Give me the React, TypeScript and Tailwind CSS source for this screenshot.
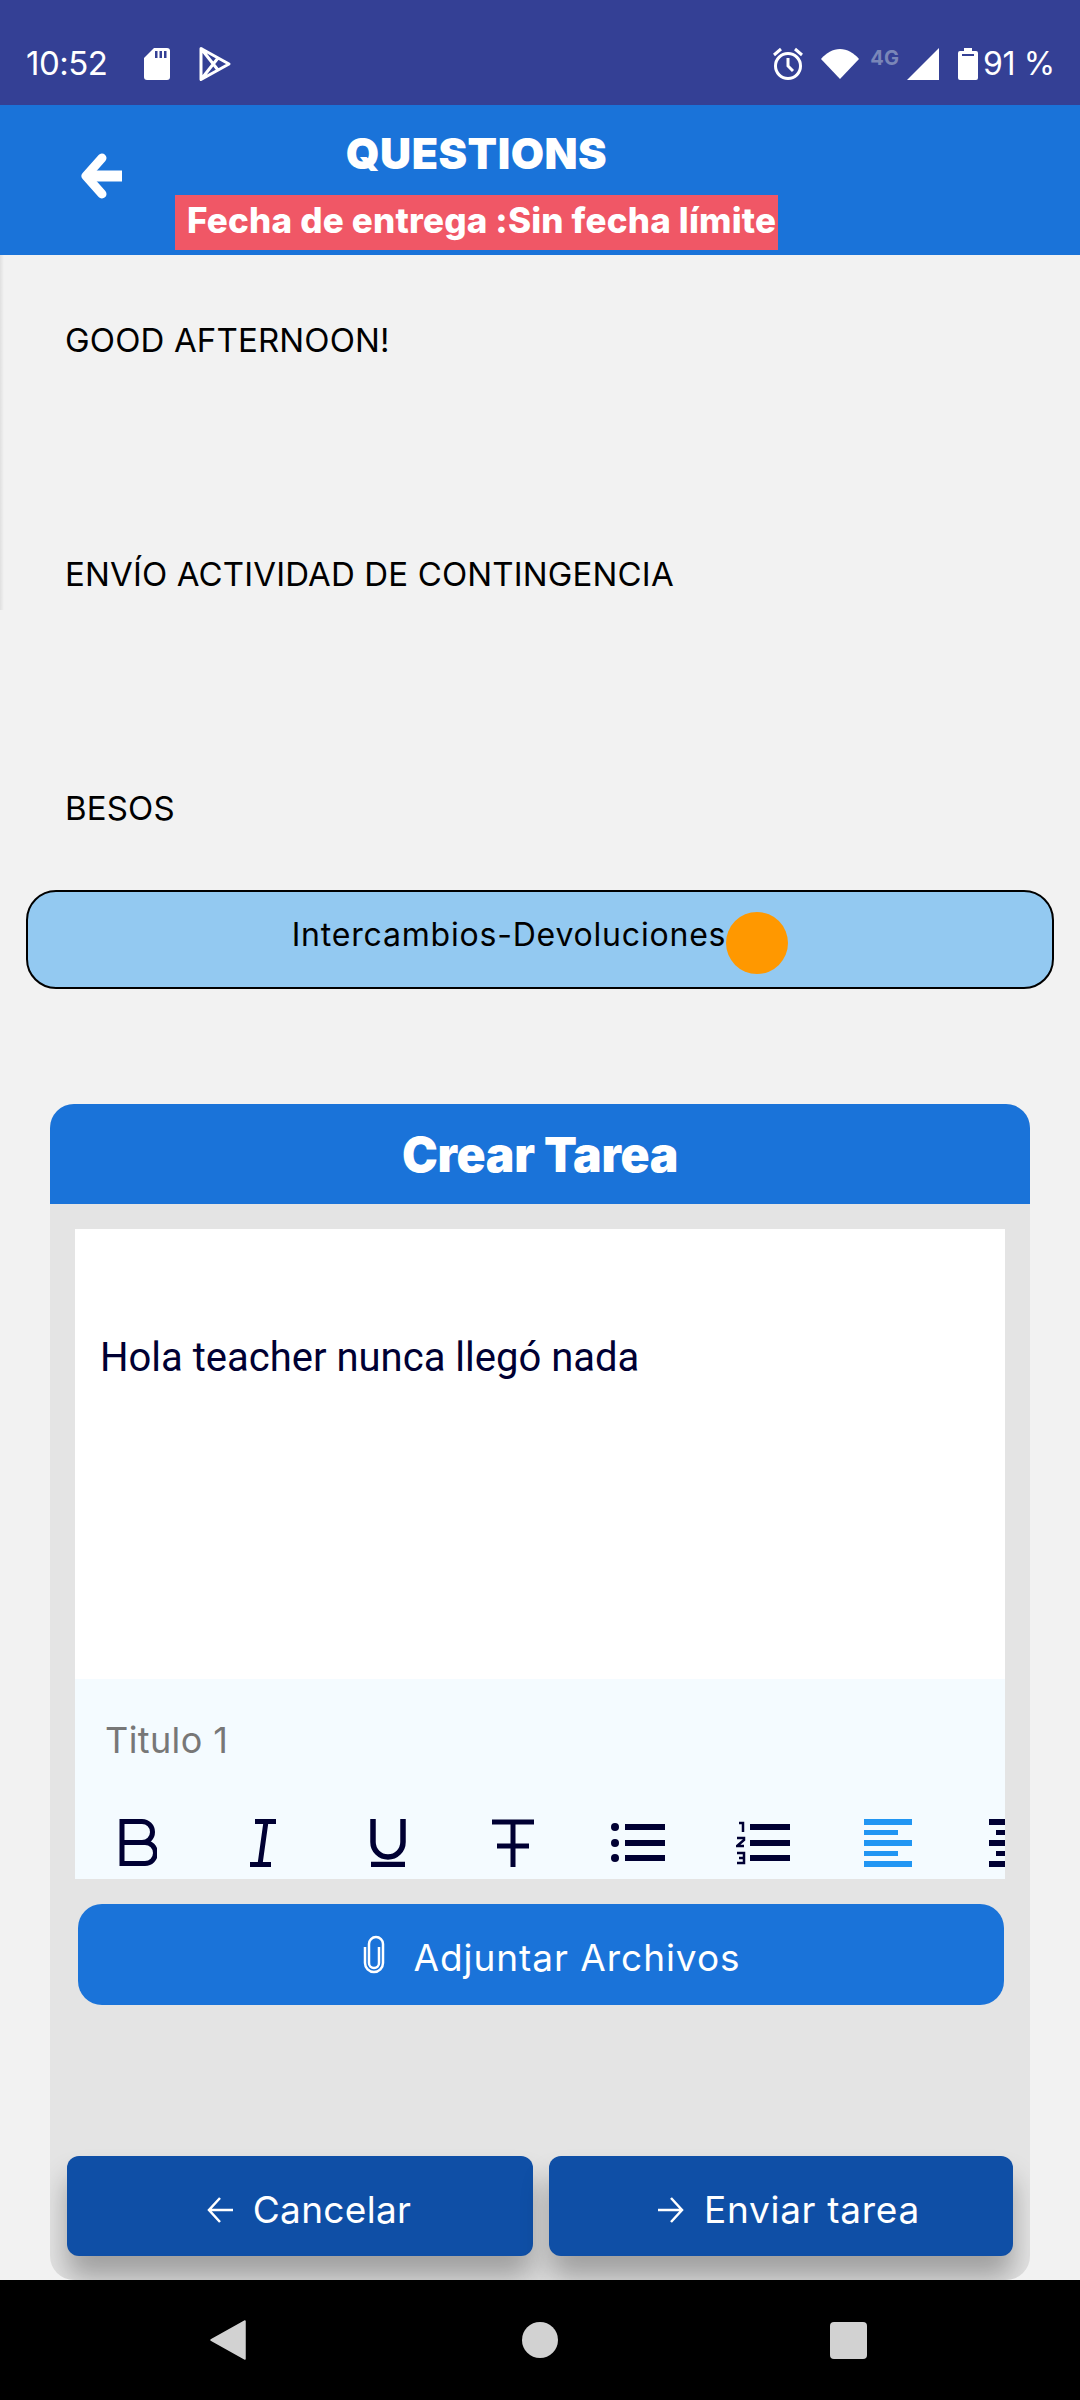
import type { ReactNode } from 'react';

const sans = 'font-["Inter","Liberation_Sans",sans-serif]';
const ink = '#000033';

function Tool({ children }: { children: ReactNode }) {
  return <div className="w-[125px] shrink-0 flex items-center justify-center">{children}</div>;
}

function Toolbar() {
  return (
    <div className="flex h-[48px] overflow-hidden">
      <Tool>
        <svg width="38" height="48" viewBox="0 0 38 48" fill="none" stroke={ink} strokeWidth="5">
          <path d="M3 2.5h20a10.5 10.5 0 0 1 0 21H3zM3 23.5h23a10.5 10.5 0 0 1 0 21H3z" />
        </svg>
      </Tool>
      <Tool>
        <svg width="28" height="48" viewBox="0 0 28 48" fill="none" stroke={ink} strokeWidth="5">
          <path d="M6 2.5h21M1 45.5h21M17 2.5l-6 43" />
        </svg>
      </Tool>
      <Tool>
        <svg width="36" height="48" viewBox="0 0 36 48" fill="none" stroke={ink} strokeWidth="5.5">
          <path d="M3 0v23a15 15 0 0 0 30 0V0M1 45.5h34" />
        </svg>
      </Tool>
      <Tool>
        <svg width="42" height="48" viewBox="0 0 42 48" fill="none" stroke={ink} strokeWidth="5">
          <path d="M0 3h42M21 3v45M5 27h32" />
        </svg>
      </Tool>
      <Tool>
        <svg width="54" height="48" viewBox="0 0 54 48" fill={ink}>
          <circle cx="4" cy="8" r="4" />
          <circle cx="4" cy="24" r="4" />
          <circle cx="4" cy="39" r="4" />
          <rect x="14" y="5" width="40" height="6" />
          <rect x="14" y="21" width="40" height="6" />
          <rect x="14" y="36" width="40" height="6" />
        </svg>
      </Tool>
      <Tool>
        <svg width="54" height="48" viewBox="0 0 54 48" fill="none" stroke={ink}>
          <path d="M14 8h40M14 24h40M14 39h40" strokeWidth="6" />
          <path d="M3 4h4v9M1 19h7v2l-7 6h7M1 34h7v10H1M3 39h5" strokeWidth="2.5" />
        </svg>
      </Tool>
      <Tool>
        <svg width="48" height="48" viewBox="0 0 48 48" fill="#2196f3">
          <rect x="0" y="0" width="48" height="6" />
          <rect x="0" y="11" width="34" height="5" />
          <rect x="0" y="21" width="48" height="6" />
          <rect x="0" y="32" width="34" height="5" />
          <rect x="0" y="42" width="48" height="6" />
        </svg>
      </Tool>
      <Tool>
        <svg width="48" height="48" viewBox="0 0 48 48" fill={ink}>
          <rect x="0" y="0" width="48" height="6" />
          <rect x="7" y="11" width="34" height="5" />
          <rect x="0" y="21" width="48" height="6" />
          <rect x="7" y="32" width="34" height="5" />
          <rect x="0" y="42" width="48" height="6" />
        </svg>
      </Tool>
    </div>
  );
}

export default function App() {
  return (
    <div className={`w-[1080px] h-[2400px] flex flex-col overflow-hidden bg-[#f2f2f2] ${sans}`}>
      {/* Status bar */}
      <div className="h-[105px] shrink-0 bg-[#344095] text-white flex items-center pt-[22px] pl-[26px] pr-[25px]">
        <span className="text-[33px] tracking-[-0.5px] w-[118px]">10:52</span>
        <svg width="26" height="32" viewBox="0 0 26 32" fill="white">
          <path d="M10 0h13a3 3 0 0 1 3 3v26a3 3 0 0 1-3 3H3a3 3 0 0 1-3-3V10z" />
          <path d="M11 3h2.5v7H11zM15.5 3H18v7h-2.5zM20 3h2.5v7H20z" fill="#344095" />
        </svg>
        <svg className="ml-[28px]" width="34" height="36" viewBox="0 0 34 36" fill="none" stroke="white" strokeWidth="3" strokeLinejoin="round">
          <path d="M3 2.5 31 18 3 33.5zM3 2.5 20 24M3 33.5 20 12" />
        </svg>
        <div className="flex-1" />
        <svg width="32" height="34" viewBox="0 0 32 34" fill="none" stroke="white" strokeWidth="3">
          <circle cx="16" cy="19" r="12.5" />
          <path d="M16 11v8l5 5M2 8l7-6M30 8l-7-6" />
        </svg>
        <svg className="ml-[17px]" width="38" height="30" viewBox="0 0 38 30" fill="white">
          <path d="M0 10C5 4 12 0 19 0s14 4 19 10L19 30z" />
        </svg>
        <span className="ml-[11px] mb-[12px] text-[20px] font-bold leading-none text-[#7a86b8]">4G</span>
        <svg className="ml-[8px]" width="32" height="32" viewBox="0 0 32 32" fill="white">
          <path d="M32 0v32H0z" />
        </svg>
        <svg className="ml-[19px]" width="20" height="32" viewBox="0 0 20 32" fill="white">
          <path d="M6 0h8v3h4a2 2 0 0 1 2 2v25a2 2 0 0 1-2 2H2a2 2 0 0 1-2-2V5a2 2 0 0 1 2-2h4z" />
          <rect x="4" y="6" width="12" height="2" fill="#344095" />
        </svg>
        <span className="ml-[5px] text-[32px] tracking-[-0.3px]">91 %</span>
      </div>

      {/* Header */}
      <div className="h-[150px] shrink-0 bg-[#1a73d9] flex relative">
        <svg className="absolute left-[80px] top-[48px]" width="42" height="46" viewBox="0 0 42 46" fill="none" stroke="white" strokeLinecap="round" strokeLinejoin="round">
          <path d="M22 5 6 23l16 18" strokeWidth="9" />
          <path d="M8 23h34" strokeWidth="11" strokeLinecap="butt" />
        </svg>
        <div className="ml-[175px] flex flex-col items-center w-[603px]">
          <span className="mt-[26px] h-[44px] leading-[44px] text-[43px] font-black text-white tracking-[0.5px]">QUESTIONS</span>
          <span className="mt-[20px] h-[55px] w-[603px] bg-[#f05766] pl-[12px] leading-[50px] text-[35px] font-extrabold text-white tracking-[0.2px] whitespace-nowrap overflow-hidden">Fecha de entrega :Sin fecha límite</span>
        </div>
      </div>

      {/* Content */}
      <div className="flex-1 min-h-0 relative">
        <div className="absolute left-0 top-0 h-[355px] w-[4px] bg-gradient-to-r from-[#e0e0e0] to-transparent" />
        <div className="pt-[65px] pl-[65px] flex flex-col gap-[194px] text-[33px] leading-[40px] text-black tracking-[0.15px]">
          <p>GOOD AFTERNOON!</p>
          <p>ENVÍO ACTIVIDAD DE CONTINGENCIA</p>
          <p>BESOS</p>
        </div>

        <div className="mt-[62px] mx-[26px] h-[99px] rounded-[30px] border-2 border-black bg-[#93c9f1] flex items-center justify-center">
          <span className="text-[32px] tracking-[0.8px] text-black leading-none mb-[10px]">Intercambios-Devoluciones</span>
          <span className="w-[62px] h-[62px] rounded-full bg-[#ff9800] mt-[6px]" />
        </div>

        <div className="mt-[115px] mx-[50px] h-[1176px] rounded-[24px] overflow-hidden bg-[#e4e4e4] flex flex-col">
          <div className="h-[100px] shrink-0 bg-[#1a73d9] flex items-center justify-center pt-[2px] text-[48px] font-black text-white tracking-[-0.3px]">Crear Tarea</div>
          <div className="mt-[25px] mx-[25px]">
            <div className="h-[450px] bg-white pt-[105px] pl-[25px] font-['Roboto',sans-serif] text-[40px] leading-[48px] text-[#000033]">Hola teacher nunca llegó nada</div>
            <div className="h-[200px] bg-[#f4fbff]">
              <div className="pt-[39px] pl-[30px] h-[140px] text-[36px] leading-[44px] text-[#777777] tracking-[0.4px]">Titulo 1</div>
              <Toolbar />
            </div>
          </div>
          <div className="mt-[25px] ml-[28px] mr-[26px] h-[101px] rounded-[24px] bg-[#1a73d9] flex items-center justify-center gap-[26px] pl-[20px] text-[37px] text-white tracking-[0.95px]">
            <svg width="26" height="40" viewBox="0 0 26 40" fill="none" stroke="white" strokeWidth="2.5">
              <path d="M4 12v16a9 9 0 0 0 18 0V9a7 7 0 0 0-14 0v19a5 5 0 0 0 10 0V12" />
            </svg>
            <span className="pt-[6px]">Adjuntar Archivos</span>
          </div>
          <div className="mt-[151px] mx-[17px] flex gap-[16px] text-[37px] text-white">
            <div className="flex-1 h-[100px] rounded-[12px] bg-[#0f4fa6] shadow-[0_22px_28px_rgba(0,0,0,0.3)] flex items-center justify-center gap-[20px] pl-[18px] pt-[8px] tracking-[0.3px]">
              <svg width="26" height="26" viewBox="0 0 26 26" fill="none" stroke="white" strokeWidth="2.5">
                <path d="M26 13H2M13 1 2 13l11 12" />
              </svg>
              <span>Cancelar</span>
            </div>
            <div className="flex-1 h-[100px] rounded-[12px] bg-[#0f4fa6] shadow-[0_22px_28px_rgba(0,0,0,0.3)] flex items-center justify-center gap-[20px] pl-[16px] pt-[8px] tracking-[0.7px]">
              <svg width="26" height="26" viewBox="0 0 26 26" fill="none" stroke="white" strokeWidth="2.5">
                <path d="M0 13h24M13 1l11 12-11 12" />
              </svg>
              <span>Enviar tarea</span>
            </div>
          </div>
        </div>
      </div>

      {/* Nav bar */}
      <div className="h-[120px] shrink-0 bg-black flex items-center justify-center pr-[3px]">
        <svg width="36" height="40" viewBox="0 0 36 40" fill="#d2d2d2">
          <path d="M35 1v38L1 20z" stroke="#d2d2d2" strokeLinejoin="round" strokeWidth="1.5" />
        </svg>
        <span className="ml-[276px] w-[36px] h-[36px] rounded-full bg-[#d2d2d2]" />
        <span className="ml-[272px] w-[37px] h-[37px] rounded-[4px] bg-[#d2d2d2]" />
      </div>
    </div>
  );
}
